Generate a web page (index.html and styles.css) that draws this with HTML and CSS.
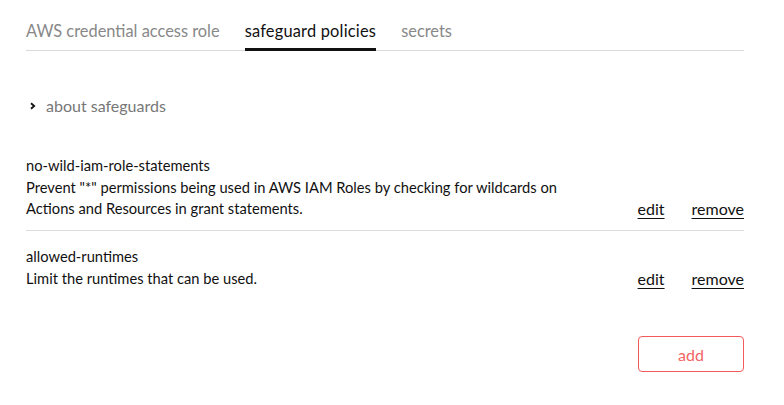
FILE: index.html
```html
<!DOCTYPE html>
<html>
<head>
<meta charset="utf-8">
<link rel="stylesheet" href="styles.css">
</head>
<body>
<div class="page">
  <nav class="tabs">
    <span class="tab">AWS credential access role</span>
    <span class="tab active">safeguard policies</span>
    <span class="tab">secrets</span>
  </nav>
  <div class="about">
    <svg class="chev" width="8" height="8" viewBox="0 0 8 8"><path d="M2 1.2 L5.2 4 L2 6.8" fill="none" stroke="#111" stroke-width="1.8"/></svg>
    <span>about safeguards</span>
  </div>
  <div class="policies">
    <div class="policy">
      <div class="info">
        <div>no-wild-iam-role-statements</div>
        <div>Prevent "*" permissions being used in AWS IAM Roles by checking for wildcards on<br>Actions and Resources in grant statements.</div>
      </div>
      <div class="actions"><a href="#">edit</a><a href="#">remove</a></div>
    </div>
    <div class="policy">
      <div class="info">
        <div>allowed-runtimes</div>
        <div>Limit the runtimes that can be used.</div>
      </div>
      <div class="actions"><a href="#">edit</a><a href="#">remove</a></div>
    </div>
  </div>
  <div class="footer"><button class="add">add</button></div>
</div>
</body>
</html>
```
FILE: styles.css
```css
* { box-sizing: border-box; }
body { margin: 0; background: #fff; font-family: Lato, "Noto Sans", sans-serif; color: #111; }
.page { width: 718px; margin-left: 26px; padding-top: 20px; }
.tabs { display: flex; gap: 25px; border-bottom: 1px solid #d9d9d9; height: 31px; }
.tab { font-size: 16.4px; color: #888; line-height: 22px; height: 31px; }
.tab.active { color: #111; border-bottom: 3px solid #111; letter-spacing: 0.2px; }
.about { display: flex; align-items: center; gap: 9px; margin-top: 45px; padding-left: 3px; font-size: 16px; color: #777; line-height: 20px; }
.chev { display: block; }
.policies { margin-top: 25px; }
.policy { display: flex; justify-content: space-between; align-items: flex-end; font-size: 14.7px; line-height: 21px; padding: 14px 0 11px; border-bottom: 1px solid #dcdcdc; }
.policy > .info > div:first-child { margin-bottom: 1px; }
.policy:last-child { border-bottom: none; }
.policy + .policy { padding-top: 15px; }
.actions { display: flex; gap: 27px; font-size: 16px; line-height: 21px; }
.actions a { color: #111; text-decoration: underline; text-underline-offset: 3px; }
.footer { display: flex; justify-content: flex-end; margin-top: 36px; }
.add { width: 106px; height: 36px; border: 1px solid #f55a5a; border-radius: 4px; background: #fff; color: #f36464; font-family: inherit; font-size: 16px; }
```
